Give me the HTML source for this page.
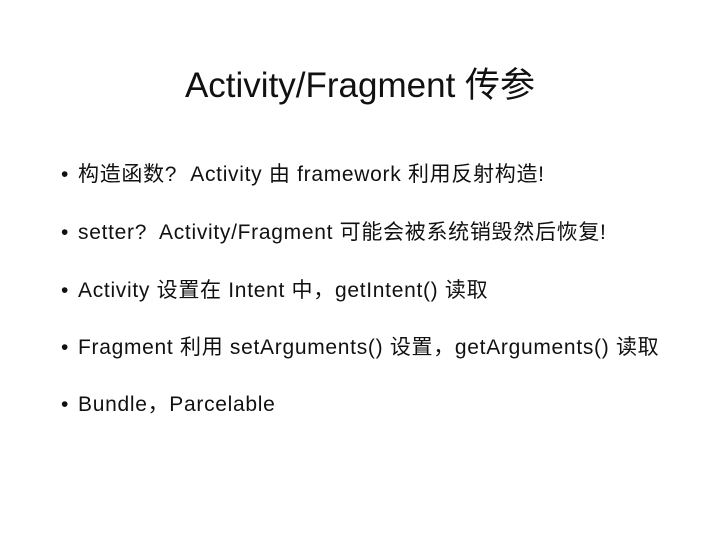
<!DOCTYPE html>
<html><head><meta charset="utf-8"><style>
body{margin:0;width:720px;height:540px;background:#fff;overflow:hidden;font-family:"Liberation Sans","Noto Sans CJK SC",sans-serif;color:#111;}
.t{position:absolute;left:0;width:720px;top:63px;text-align:center;font-size:35px;line-height:46px;white-space:nowrap;}
.b{position:absolute;left:78px;font-size:21px;letter-spacing:0.7px;line-height:28px;white-space:nowrap;}
.b:before{content:"•";position:absolute;left:-17px;}
</style></head><body>
<div class="t">Activity/Fragment 传参</div>
<div class="b" style="top:161px">构造函数?&nbsp; Activity 由 framework 利用反射构造!</div>
<div class="b" style="top:219px">setter?&nbsp; Activity/Fragment 可能会被系统销毁然后恢复!</div>
<div class="b" style="top:277px">Activity 设置在 Intent 中，getIntent() 读取</div>
<div class="b" style="top:334px">Fragment 利用 setArguments() 设置，getArguments() 读取</div>
<div class="b" style="top:391px">Bundle，Parcelable</div>
</body></html>
